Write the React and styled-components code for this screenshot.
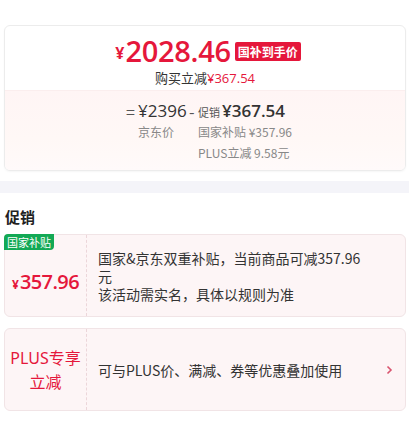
import React from "react";
import styled, { createGlobalStyle } from "styled-components";

const Global = createGlobalStyle`
  html, body { margin: 0; padding: 0; background: #fff; }
  body { font-family: "Noto Sans CJK SC", "Noto Sans", sans-serif; color: #333; }
`;

const RED = "#e5173b";

const Page = styled.div`
  width: 409px;
  padding-top: 25px;
`;

const PriceCard = styled.div`
  margin: 0 3px 0 4px;
  border: 1px solid #ececec;
  border-radius: 6px;
  overflow: hidden;
  box-shadow: 0 1px 2px rgba(0,0,0,0.04);
`;

const PriceTop = styled.div`
  height: 64px;
  display: flex;
  flex-direction: column;
  align-items: center;
  padding-top: 9px;
  box-sizing: border-box;
`;

const PriceLine = styled.div`
  display: flex;
  align-items: center;
  color: ${RED};
  height: 32px;
  margin-left: 6px;
`;

const Yen = styled.span`
  font-family: "Open Sans", sans-serif;
  font-size: ${(p) => p.$size || 14}px;
  font-weight: 700;
  margin-right: 1px;
  margin-top: 4px;
  line-height: 1;
`;

const BigNum = styled.span`
  font-family: "Open Sans", sans-serif;
  font-size: 29px;
  font-weight: 600;
  letter-spacing: -0.3px;
  line-height: 30px;
`;

const Tag = styled.span`
  background: ${RED};
  color: #fff;
  font-size: 12px;
  font-weight: 700;
  padding: 1px 3px;
  border-radius: 2px;
  margin-left: 4px;
  line-height: 17px;
`;

const SubLine = styled.div`
  font-size: 13px;
  color: #333;
  line-height: 18px;
  margin-top: 2px;
  & > b {
    font-weight: 400;
    color: ${RED};
    font-family: "Open Sans", sans-serif;
  }
`;

const PriceBottom = styled.div`
  background: linear-gradient(#fff5f5 0, #fff8f6 60%, #fffafa 100%);
  border-top: 1px solid #fbeeee;
  height: 80px;
  box-sizing: border-box;
  display: grid;
  grid-template-columns: 12px 51px 9px auto;
  grid-auto-rows: 21px;
  justify-content: center;
  align-items: center;
  padding-top: 9px;
  padding-left: 8px;
`;

const Op = styled.span`
  font-size: 16px;
  color: #555;
  text-align: left;
`;

const Amount = styled.span`
  font-family: "Open Sans", sans-serif;
  font-size: 17px;
  color: #333;
  font-weight: ${(p) => (p.$bold ? 600 : 400)};
  white-space: nowrap;
  & > small {
    font-family: "Noto Sans CJK SC", sans-serif;
    font-size: 11px;
    font-weight: 400;
    color: #555;
    margin-right: 2px;
  }
`;

const Label = styled.span`
  font-size: 12px;
  color: #888;
  white-space: nowrap;
  grid-column: ${(p) => p.$col};
`;

const Band = styled.div`
  height: 12px;
  background: #f4f4f9;
  margin-top: 10px;
`;

const SectionTitle = styled.div`
  font-size: 15px;
  font-weight: 700;
  color: #222;
  padding: 13px 0 0 5px;
  line-height: 22px;
  height: 41px;
  box-sizing: border-box;
`;

const PromoCard = styled.div`
  margin: 0 3px ${(p) => p.$mb || 0}px 4px;
  height: ${(p) => p.$h}px;
  border: 1px solid #f1e4e6;
  border-radius: 6px;
  background: #fdf5f6;
  display: flex;
  position: relative;
  box-sizing: border-box;
`;

const PromoLeft = styled.div`
  width: 81px;
  flex: none;
  border-right: 1px dashed #ecd6da;
  display: flex;
  align-items: center;
  justify-content: center;
  text-align: center;
  color: ${RED};
`;

const GreenTag = styled.span`
  position: absolute;
  left: -1px;
  top: -1px;
  background: #13a955;
  color: #fff;
  font-size: 11px;
  line-height: 16px;
  padding: 0 3px;
  border-radius: 4px 0 4px 0;
`;

const PromoPrice = styled.span`
  margin-top: 12px;
  display: flex;
  align-items: baseline;
`;

const PromoNum = styled.span`
  font-family: "Open Sans", sans-serif;
  font-size: 20px;
  font-weight: 600;
  letter-spacing: -0.6px;
`;

const PlusTitle = styled.span`
  font-size: 16px;
  line-height: 24px;
  font-family: "Noto Sans", "Noto Sans CJK SC", sans-serif;
`;

const PromoText = styled.div`
  flex: 1;
  padding: 0 ${(p) => p.$pr || 30}px 0 11px;
  font-size: 14px;
  line-height: 18px;
  color: #333;
  display: flex;
  flex-direction: column;
  justify-content: center;
  & > span { font-family: "Noto Sans CJK SC", sans-serif; }
`;

const Chevron = styled.svg`
  position: absolute;
  right: 12px;
  top: 50%;
  margin-top: -5px;
`;

export default function App() {
  return (
    <Page>
      <Global />
      <PriceCard>
        <PriceTop>
          <PriceLine>
            <Yen $size={16}>¥</Yen>
            <BigNum>2028.46</BigNum>
            <Tag>国补到手价</Tag>
          </PriceLine>
          <SubLine>
            购买立减<b>¥367.54</b>
          </SubLine>
        </PriceTop>
        <PriceBottom>
          <Op>=</Op>
          <Amount>¥2396</Amount>
          <Op>-</Op>
          <Amount $bold>
            <small>促销</small>¥367.54
          </Amount>
          <Label $col="2">京东价</Label>
          <Label $col="4">国家补贴 ¥357.96</Label>
          <Label $col="4">PLUS立减 9.58元</Label>
        </PriceBottom>
      </PriceCard>
      <Band />
      <SectionTitle>促销</SectionTitle>
      <PromoCard $h={83} $mb={11}>
        <GreenTag>国家补贴</GreenTag>
        <PromoLeft>
          <PromoPrice>
            <Yen $size={12}>¥</Yen>
            <PromoNum>357.96</PromoNum>
          </PromoPrice>
        </PromoLeft>
        <PromoText $pr={36}>
          <span>国家&amp;京东双重补贴，当前商品可减357.96元</span>
          <span>该活动需实名，具体以规则为准</span>
        </PromoText>
      </PromoCard>
      <PromoCard $h={83}>
        <PromoLeft>
          <PlusTitle>
            PLUS专享
            <br />
            立减
          </PlusTitle>
        </PromoLeft>
        <PromoText>
          <span>可与PLUS价、满减、券等优惠叠加使用</span>
        </PromoText>
        <Chevron width="7" height="10" viewBox="0 0 7 10">
          <path d="M1.5 1.5 L5 5 L1.5 8.5" fill="none" stroke="#d9546e" strokeWidth="1.6" />
        </Chevron>
      </PromoCard>
    </Page>
  );
}
